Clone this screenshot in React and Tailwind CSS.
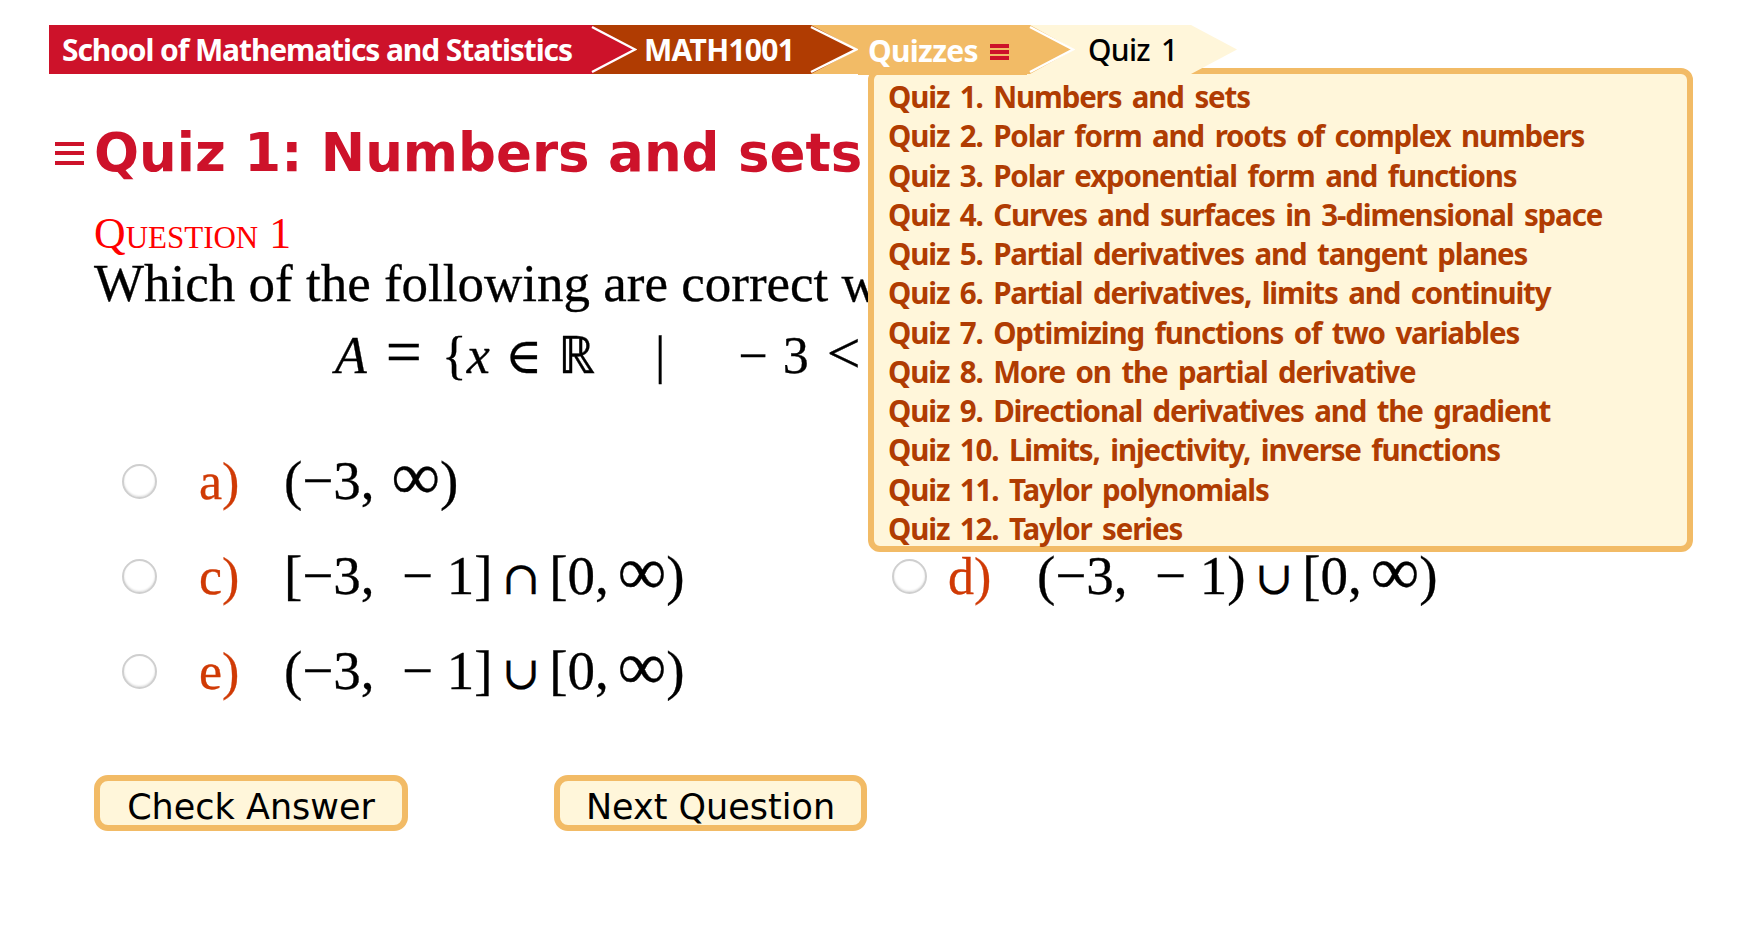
const quizzes = [
  "Quiz 1. Numbers and sets",
  "Quiz 2. Polar form and roots of complex numbers",
  "Quiz 3. Polar exponential form and functions",
  "Quiz 4. Curves and surfaces in 3-dimensional space",
  "Quiz 5. Partial derivatives and tangent planes",
  "Quiz 6. Partial derivatives, limits and continuity",
  "Quiz 7. Optimizing functions of two variables",
  "Quiz 8. More on the partial derivative",
  "Quiz 9. Directional derivatives and the gradient",
  "Quiz 10. Limits, injectivity, inverse functions",
  "Quiz 11. Taylor polynomials",
  "Quiz 12. Taylor series",
];

function Arrow({ from, to, width = 48 }) {
  return (
    <svg width={width} height="49" viewBox={`0 0 ${width} 49`} className="block shrink-0">
      <rect width={width} height="49" fill={to} />
      <polygon points={`0,0 3,0 ${width - 1},24.5 3,49 0,49`} fill={from} />
      <polyline points={`3,2 ${width - 2},24.5 3,47`} fill="none" stroke="#ffffff" strokeWidth="2.5" />
    </svg>
  );
}

function Bars({ className, color }) {
  return (
    <span className={"flex flex-col justify-between shrink-0 " + className}>
      <span className="block h-[4px]" style={{ background: color }} />
      <span className="block h-[4px]" style={{ background: color }} />
      <span className="block h-[4px]" style={{ background: color }} />
    </span>
  );
}

function Radio() {
  return <span className="block w-[35px] h-[35px] rounded-full border-2 border-[#cfcfcf] bg-white shadow-[inset_0_-1px_2px_#ddd] shrink-0" />;
}

function Inf({ className }) {
  return <span className={"text-[68px] leading-[0] " + className}>∞</span>;
}

function Op({ children }) {
  return <span className="font-['DejaVu_Serif',serif] font-normal text-[46px] leading-[0] mx-[9px]">{children}</span>;
}

function Option({ letter, children, gap }) {
  return (
    <div className="flex items-center h-[95px]">
      <Radio />
      <span className={"text-[#d03a05] text-[52px] [-webkit-text-stroke:0.3px] " + (gap || "ml-[42px] w-[85px]")}>{letter}</span>
      <span className="text-[55px] text-black whitespace-pre [-webkit-text-stroke:0.3px]">{children}</span>
    </div>
  );
}

export default function App() {
  return (
    <div className="relative w-[1744px] h-[938px] bg-white overflow-hidden font-['Liberation_Serif',serif]">
      <nav className="relative z-10 flex h-[49px] ml-[49px] mt-[25px] font-['Noto_Sans',sans-serif] font-bold text-[30px] tracking-[-0.7px]">
        <div className="w-[540px] h-[49px] bg-[#cd122a] text-white pl-[13px] leading-[49px] whitespace-nowrap tracking-[-1.1px]">School of Mathematics and Statistics</div>
        <Arrow from="#cd122a" to="#b03c02" />
        <div className="w-[171px] h-[49px] bg-[#b03c02] text-white pl-[7px] leading-[49px]">MATH1001</div>
        <Arrow from="#b03c02" to="#f2bb66" width={50} />
        <div className="flex items-center w-[169px] h-[50px] bg-[#f2bb66] text-white pl-[10px] leading-[49px]">
          Quizzes
          <Bars className="w-[19px] h-[16px] ml-[12px] mt-[3px]" color="#cd122a" />
        </div>
        <Arrow from="#f2bb66" to="#fff6da" />
        <div className="w-[116px] h-[49px] bg-[#fff6da] text-black pl-[13px] leading-[49px] font-medium [word-spacing:4px]">Quiz 1</div>
        <svg width="46" height="49" viewBox="0 0 46 49" className="block shrink-0">
          <polygon points="0,0 46,24.5 0,49" fill="#fff6da" />
        </svg>
      </nav>

      <div className="absolute left-[868px] top-[68px] w-[825px] h-[484px] z-0 rounded-[12px] border-[6px] border-[#f2bb66] bg-[#fff6da] pl-[14px] pt-[3px] font-['Noto_Sans',sans-serif] font-bold text-[29.5px] tracking-[-1.15px] [word-spacing:4px] text-[#b03c02]">
        {quizzes.map((q) => (
          <div key={q} className="h-[39.25px] leading-[39px] whitespace-nowrap">{q}</div>
        ))}
      </div>

      <h1 className="flex items-center pl-[55px] mt-[49px] h-[60px] font-['DejaVu_Sans',sans-serif] font-bold text-[53px] text-[#cd122a] whitespace-nowrap">
        <Bars className="w-[29px] h-[23px] mr-[10px]" color="#cd122a" />
        Quiz 1: Numbers and sets
      </h1>
      <div className="pl-[94px] pt-[30px]">
        <div className="text-[43.8px] leading-[41px] text-[#ff0000] [font-variant:small-caps]">Question 1</div>
        <p className="text-[53px] leading-[58px] text-black whitespace-nowrap [-webkit-text-stroke:0.3px]">Which of the following are correct w</p>
        <p className="text-[52px] leading-[58px] text-black pl-[241px] mt-[15px] whitespace-pre [-webkit-text-stroke:0.3px]">
          <i>A</i>
          <span className="text-[64px] leading-[0] ml-[19px] mr-[20px]">=</span>
          {"{"}<i>x</i>
          <span className="font-['DejaVu_Serif',serif] text-[50px] leading-[0] ml-[15px] mr-[16px]">∈</span>
          ℝ
          <span className="ml-[60px] mr-[73px]">|</span>
          −
          <span className="ml-[15px] mr-[18px]">3</span>
          <span className="text-[60px] leading-[0]">&lt;</span>
        </p>
      </div>
      <div className="grid grid-cols-[770px_1fr] pl-[122px] mt-[49px]">
        <Option letter="a)">(−3,<Inf className="ml-[17px]" />)</Option>
        <div />
        <Option letter="c)">[−3,  − 1]<Op>∩</Op>[0,<Inf className="ml-[9px]" />)</Option>
        <Option letter="d)" gap="ml-[21px] w-[89px]">(−3,  − 1)<Op>∪</Op>[0,<Inf className="ml-[9px]" />)</Option>
        <Option letter="e)">(−3,  − 1]<Op>∪</Op>[0,<Inf className="ml-[9px]" />)</Option>
      </div>
      <div className="flex pl-[94px] mt-[56px] gap-[146px] font-['DejaVu_Sans',sans-serif] text-[35px] text-black">
        <button className="w-[314px] h-[56px] rounded-[14px] border-[6px] border-[#f2bb66] bg-[#fff6da]">Check Answer</button>
        <button className="w-[313px] h-[56px] rounded-[14px] border-[6px] border-[#f2bb66] bg-[#fff6da]">Next Question</button>
      </div>
    </div>
  );
}
